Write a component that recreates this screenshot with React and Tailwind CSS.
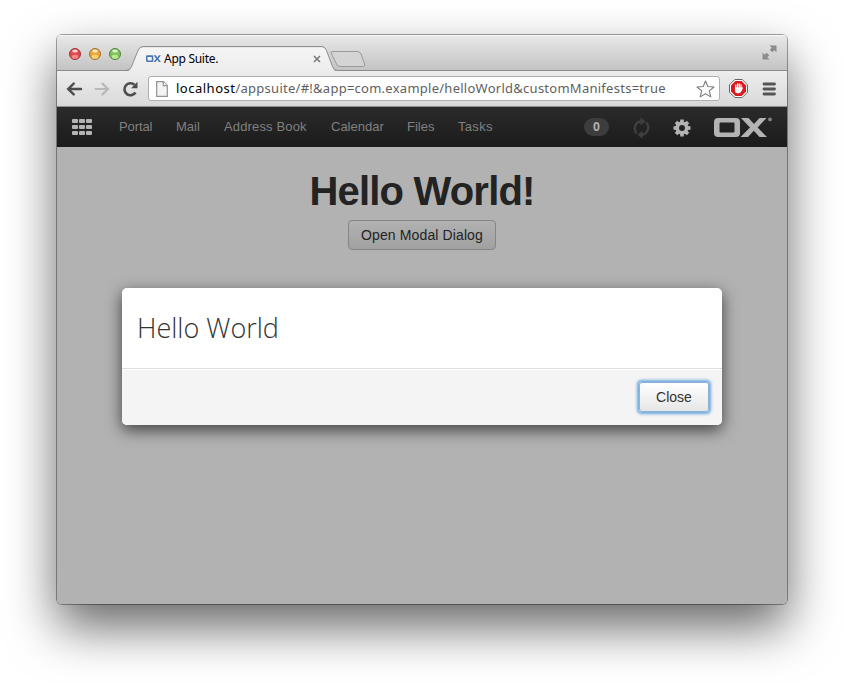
import React from "react";

const lights = [
  ["#e2494c", "#8f2a2c", "#ff9c9c"],
  ["#eba63c", "#96651c", "#ffe08a"],
  ["#7fc45a", "#3f7a2c", "#cdf5a5"],
];

function TrafficLights() {
  return (
    <div className="flex gap-[8px]">
      {lights.map(([fill, edge, glow]) => (
        <svg key={fill} width="12" height="12" viewBox="0 0 12 12">
          <circle cx="6" cy="6" r="5.5" fill={fill} stroke={edge} strokeWidth="0.9" />
          <ellipse cx="6" cy="8.8" rx="3.3" ry="2" fill={glow} opacity="0.75" />
          <ellipse cx="6" cy="3" rx="2.8" ry="1.6" fill="#fff" opacity="0.75" />
        </svg>
      ))}
    </div>
  );
}

function OxMark({ className, registered }) {
  return (
    <svg className={className} viewBox={registered ? "0 0 58 20" : "0 0 53 20"} preserveAspectRatio="none" fill="currentColor">
      <path fillRule="evenodd" d="M4 1H22Q26 1 26 5V16Q26 20 22 20H4Q0 20 0 16V5Q0 1 4 1ZM6.500 5.500Q5.500 5.500 5.500 6.500V14.500Q5.500 15.500 6.500 15.500H19.500Q20.500 15.500 20.500 14.500V6.500Q20.500 5.500 19.500 5.500Z" />
      <path d="M27 1H34.500L40 7L45.500 1H52.500L43.600 10.400L53 20H45.500L39.800 13.800L34 20H26.500L36 10.400Z" />
      {registered && <circle cx="56" cy="2.400" r="1.900" opacity="0.65" />}
    </svg>
  );
}

function TitleBar() {
  return (
    <div className="relative flex h-[36px] shrink-0 items-center border-b border-[#8b8b8b] bg-gradient-to-b from-[#e9e9e9] to-[#c3c3c3] pl-[12px] pr-[10px] pt-[2px] shadow-[inset_0_1px_0_#f7f7f7]">
      <TrafficLights />
      <div className="relative ml-[5px] h-[34px] w-[244px]">
        <svg className="absolute left-0 top-[9px]" width="244" height="27" viewBox="0 0 244 27">
          <defs>
            <linearGradient id="tab" x1="0" y1="0" x2="0" y2="1">
              <stop offset="0" stopColor="#f5f5f5" />
              <stop offset="1" stopColor="#ececec" />
            </linearGradient>
          </defs>
          <path d="M0 25.500Q4 25 5.500 21.500L12 5.500Q14 1.500 17.500 1.500H196Q199 1.500 200.500 5.500L206.500 21.500Q208 25 211 25.500V27H0Z" fill="url(#tab)" />
          <path d="M0 24.500Q4 24.500 5.500 20.500L12 4.500Q13.500 0.500 17 0.500H196Q199 0.500 200.500 4.500L206.500 20.500Q208 24.500 211 24.500" fill="none" stroke="#909090" />
          <path d="M206 5.500H231.500Q234 5.500 235 8L238.500 18Q239.500 20.500 237 20.500H214.500Q211.500 20.500 210.500 18L205.500 8Q204 5.500 206 5.500Z" fill="#d4d4d4" stroke="#9a9a9a" />
        </svg>
        <div className="relative flex h-full items-center pl-[20px] pt-[10px]">
          <OxMark className="mb-[1px] h-[7px] w-[15px] text-[#4a76b0]" />
          <span className="ml-[3px] whitespace-nowrap font-['Noto_Sans',sans-serif] text-[12px] leading-[18px] tracking-[-0.280px] text-black">App Suite.</span>
          <svg className="absolute left-[187px] top-[18px]" width="8" height="8" viewBox="0 0 8 8">
            <path d="M1 1L7 7M7 1L1 7" stroke="#777" strokeWidth="1.500" />
          </svg>
        </div>
      </div>
      <svg className="ml-auto mb-[3px]" width="15" height="15" viewBox="0 0 15 15" fill="#8c8c8c">
        <path d="M7.500 0.500H14.500V7.500L12.300 5.300L10.300 7.300L7.700 4.700L9.700 2.700ZM0.500 7.500L2.700 9.700L4.700 7.700L7.300 10.300L5.300 12.300L7.500 14.500H0.500Z" />
      </svg>
    </div>
  );
}

function Toolbar() {
  return (
    <div className="flex h-[36px] shrink-0 items-center border-b border-[#8f8f8f] bg-gradient-to-b from-[#ededed] to-[#d9d9d9] pl-[9px] pr-[11px]">
      <svg width="17" height="14" viewBox="0 0 17 14" fill="none" stroke="#4d4d4d" strokeWidth="2.400" strokeLinecap="round">
        <path d="M15 7H2.500M7.700 1.600L2.200 7L7.700 12.400" />
      </svg>
      <svg className="ml-[11px]" width="16" height="14" viewBox="0 0 16 14" fill="none" stroke="#b9b9b9" strokeWidth="2.200" strokeLinecap="round">
        <path d="M1.500 7H13.500M8.500 1.600L14 7L8.500 12.400" />
      </svg>
      <svg className="ml-[12px]" width="17" height="16" viewBox="0 0 17 16">
        <path d="M13.500 11.500A6 6 0 1 1 12.500 3.800" fill="none" stroke="#4d4d4d" strokeWidth="2.600" />
        <path d="M15.500 0.800V7.200H9.100Z" fill="#4d4d4d" />
      </svg>
      <div className="ml-[9px] flex h-[25px] w-[572px] items-center rounded-[3px] border border-[#b0b0b0] bg-white pl-[7px] pr-[4px]">
        <svg width="12" height="16" viewBox="0 0 12 16">
          <path d="M0.700 0.700H7.500L11.300 4.500V15.300H0.700Z" fill="#f4f4f4" stroke="#929292" strokeWidth="1.200" />
          <path d="M7.300 0.700V4.700H11.300" fill="#fff" stroke="#929292" strokeWidth="1.200" />
        </svg>
        <span className="ml-[8px] whitespace-nowrap font-['Noto_Sans',sans-serif] text-[13px] tracking-[0.260px] text-[#5f5f5f]">
          <span className="tracking-[0.500px] text-black">localhost</span>/appsuite/#!&amp;app=com.example/helloWorld&amp;customManifests=true
        </span>
        <svg className="ml-auto shrink-0" width="19" height="18" viewBox="0 0 19 18">
          <path d="M9.500 1L11.800 6.500L18 7L13.300 10.900L14.800 16.900L9.500 13.700L4.200 16.900L5.700 10.900L1 7L7.200 6.500Z" fill="#fff" stroke="#7c7c7c" strokeWidth="1.100" strokeLinejoin="round" />
        </svg>
      </div>
      <svg className="ml-[9px]" width="19" height="19" viewBox="0 0 19 19">
        <path d="M5.800 0.500H13.200L18.500 5.800V13.200L13.200 18.500H5.800L0.500 13.200V5.800Z" fill="#fff" stroke="#666" />
        <path d="M6.400 2H12.600L17 6.400V12.600L12.600 17H6.400L2 12.600V6.400Z" fill="#dc1a20" />
        <path d="M6.700 10V6.200M8.500 9V4.900M10.300 9V4.900M12 10V6" stroke="#fff" strokeWidth="1.300" strokeLinecap="round" />
        <path d="M6.050 8.500H12.600L13.300 8.300Q14.300 8.200 13.900 9.200L12.300 12.600Q11.500 14.300 9.700 14.300H8.500Q6.050 14.300 6.050 12Z" fill="#fff" />
      </svg>
      <svg className="ml-auto" width="14" height="14" viewBox="0 0 14 14" stroke="#555" strokeWidth="2.800" strokeLinecap="round">
        <path d="M2 2H12.500M2 7H12.500M2 12H12.500" />
      </svg>
    </div>
  );
}

const teeth = [0, 45, 90, 135, 180, 225, 270, 315];

function AppNav() {
  return (
    <nav className="flex h-[40px] shrink-0 items-center bg-gradient-to-b from-[#2b2b2b] to-[#1b1b1b] pl-[15px] pr-[15px] font-['Liberation_Sans',Arial,sans-serif] text-[13px] text-[#808080]">
      <div className="grid grid-cols-3 gap-x-[1px] gap-y-[2px]">
        {Array.from({ length: 9 }, (_, i) => (
          <span key={i} className="h-[4px] w-[6px] rounded-[1px] bg-[#b4b4b4]" />
        ))}
      </div>
      <div className="ml-[27px] flex gap-[24px] whitespace-nowrap">
        <span className="w-[33px] tracking-[-0.100px]">Portal</span>
        <span className="w-[24px]">Mail</span>
        <span className="w-[83px] tracking-[0.150px]">Address Book</span>
        <span className="w-[52px]">Calendar</span>
        <span className="w-[27px]">Files</span>
        <span className="tracking-[0.300px]">Tasks</span>
      </div>
      <span className="ml-auto flex h-[18px] w-[25px] items-center justify-center rounded-full bg-[#3d3d3d] font-['Open_Sans',sans-serif] text-[12px] font-bold text-[#b0b0b0]">0</span>
      <svg className="ml-[24px] mt-[2px]" width="17" height="22" viewBox="0 0 17 22">
        <g fill="none" stroke="#3f3f3f" strokeWidth="2.400">
          <path d="M3.800 16.500A7.200 7.200 0 0 1 8.500 4.300" />
          <path d="M13.200 5.500A7.200 7.200 0 0 1 8.500 17.700" />
        </g>
        <path d="M7.500 0.300L12.500 4.300L7.500 8.500ZM9.500 13.500L4.500 17.700L9.500 21.700Z" fill="#3f3f3f" />
      </svg>
      <svg className="ml-[23px] mt-[2px]" width="18" height="18" viewBox="0 0 18 18">
        <g fill="#b3b3b3">
          {teeth.map((a) => (
            <path key={a} d="M7.300 0.500H10.700L11 4H7Z" transform={`rotate(${a} 9 9)`} />
          ))}
        </g>
        <circle cx="9" cy="9" r="4.700" fill="none" stroke="#b3b3b3" strokeWidth="3.500" />
      </svg>
      <OxMark registered className="ml-[23px] h-[20px] w-[58px] text-[#b3b3b3]" />
    </nav>
  );
}

function Modal() {
  return (
    <section className="absolute left-[65px] top-[141px] h-[137px] w-[600px] rounded-[5px] text-[#333] shadow-[0_5px_16px_rgba(0,0,0,0.65)]">
      <div className="flex h-full flex-col overflow-hidden rounded-[5px] bg-white">
        <div className="flex h-[81px] items-center border-b border-[#dddddd] pl-[15px]">
          <h2 className="whitespace-nowrap font-['Open_Sans',sans-serif] text-[27px] font-light leading-[40px]">Hello World</h2>
        </div>
        <div className="flex flex-1 items-center justify-end border-t border-white bg-[#f4f4f4] pb-[1px] pr-[13px]">
          <button className="h-[30px] w-[70px] rounded-[3px] border border-[#8ab4dc] bg-gradient-to-b from-white to-[#e6e6e6] text-[14px] shadow-[0_0_3px_1.500px_#6fa8dc]">Close</button>
        </div>
      </div>
    </section>
  );
}

export default function App() {
  return (
    <div className="h-[683px] w-[844px] overflow-hidden bg-white pl-[57px] pt-[35px]">
      <div className="flex h-[569px] w-[730px] flex-col rounded-[5px] shadow-[0_0_0_1px_rgba(0,0,0,0.35),0_23px_50px_rgba(0,0,0,0.6)]">
        <div className="flex h-full flex-col overflow-hidden rounded-[4px]">
          <TitleBar />
          <Toolbar />
          <AppNav />
          <main className="relative flex flex-1 flex-col items-center bg-[#b2b2b2] pt-[24px] font-['Liberation_Sans',Arial,sans-serif] text-[#232323]">
            <h1 className="whitespace-nowrap text-[40px] font-bold leading-[40px] tracking-[-0.800px]">Hello World!</h1>
            <button className="mt-[9px] h-[30px] w-[148px] whitespace-nowrap rounded-[4px] border border-[#858585] bg-gradient-to-b from-[#b1b1b1] to-[#a1a1a1] text-[14px] tracking-[0.120px]">Open Modal Dialog</button>
            <Modal />
          </main>
        </div>
      </div>
    </div>
  );
}
